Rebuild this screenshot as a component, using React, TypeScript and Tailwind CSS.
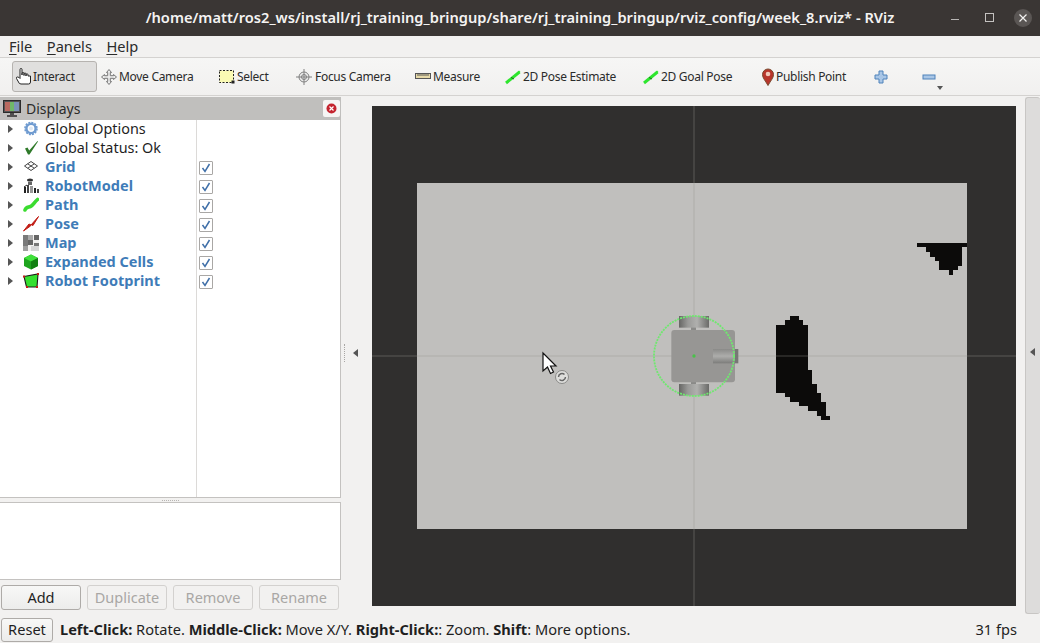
import React from "react";

const displays = [
  { name: "Global Options", kind: "opts", blue: false, check: false },
  { name: "Global Status: Ok", kind: "ok", blue: false, check: false },
  { name: "Grid", kind: "grid", blue: true, check: true },
  { name: "RobotModel", kind: "robot", blue: true, check: true },
  { name: "Path", kind: "path", blue: true, check: true },
  { name: "Pose", kind: "pose", blue: true, check: true },
  { name: "Map", kind: "map", blue: true, check: true },
  { name: "Expanded Cells", kind: "cells", blue: true, check: true },
  { name: "Robot Footprint", kind: "foot", blue: true, check: true },
];

function TreeIcon({ kind }: { kind: string }) {
  const c = "w-4 h-4 shrink-0";
  switch (kind) {
    case "opts":
      return (
        <svg className={c} viewBox="0 0 16 16">
          <circle cx="8" cy="7.5" r="4.6" fill="none" stroke="#6f9bd0" strokeWidth="2.4" />
          <circle cx="8" cy="7.5" r="6" fill="none" stroke="#6f9bd0" strokeWidth="1.6" strokeDasharray="2 1.1" />
          <circle cx="8" cy="7.5" r="2" fill="#dfe8f3" />
        </svg>
      );
    case "ok":
      return (
        <svg className={c} viewBox="0 0 16 16">
          <path d="M2 8.5 L4.5 7.5 L6.2 10.5 L14.5 1 L15 1.5 L6.5 14.5 L5 14.5 Z" fill="#2f7a2a" />
        </svg>
      );
    case "grid":
      return (
        <svg className={c} viewBox="0 0 16 16" fill="none" stroke="#444" strokeWidth="1">
          <path d="M1.5 7 L8 2.5 L14.5 7 L8 11.5 Z" />
          <path d="M4.7 4.8 L11.2 9.2 M11.3 4.8 L4.8 9.2" />
        </svg>
      );
    case "robot":
      return (
        <svg className={c} viewBox="0 0 16 16">
          <ellipse cx="7" cy="2" rx="3" ry="1.6" fill="#333" />
          <rect x="5" y="4" width="4" height="3" fill="#666" />
          <rect x="1" y="9" width="2" height="6" fill="#222" />
          <rect x="4" y="7" width="2" height="8" fill="#444" />
          <rect x="7" y="8" width="3" height="7" fill="#999" />
          <rect x="11" y="10" width="2" height="5" fill="#222" />
          <rect x="14" y="11" width="2" height="4" fill="#444" />
          <path d="M1 9 L4 7" stroke="#222" />
        </svg>
      );
    case "path":
      return (
        <svg className={c} viewBox="0 0 16 16" fill="none">
          <path d="M2 13 C3 10 5 10.5 7.5 9.5 C10 8.5 11 5.5 14.5 2.5" stroke="#3bdc30" strokeWidth="3.6" strokeLinecap="round" />
        </svg>
      );
    case "pose":
      return (
        <svg className={c} viewBox="0 0 16 16">
          <path d="M0.5 15 L6 8 L8 9 L15.5 0.5 L10 9.5 L8 8.5 L7.5 10 Z" fill="#c11d16" stroke="#c11d16" strokeWidth="1" />
        </svg>
      );
    case "map":
      return (
        <svg className={c} viewBox="0 0 16 16">
          <rect x="0" y="0" width="16" height="16" fill="#f2f1f0" />
          <rect x="0" y="0" width="5" height="16" fill="#7a7a7a" />
          <rect x="5" y="0" width="5" height="5" fill="#a8a8a8" />
          <rect x="11" y="0" width="5" height="5" fill="#666" />
          <rect x="5" y="5" width="5" height="5" fill="#666" />
          <rect x="11" y="8" width="5" height="3" fill="#777" />
          <rect x="8" y="11" width="8" height="5" fill="#d6d6d6" />
          <rect x="0" y="11" width="5" height="5" fill="#a0a0a0" />
        </svg>
      );
    case "cells":
      return (
        <svg className={c} viewBox="0 0 16 16">
          <path d="M8 0.5 L15 4 L15 12 L8 15.5 L1 12 L1 4 Z" fill="#1fa51f" />
          <path d="M8 0.5 L15 4 L8 7.5 L1 4 Z" fill="#3fe03a" />
          <path d="M8 7.5 L15 4 L15 12 L8 15.5 Z" fill="#128012" />
        </svg>
      );
    default:
      return (
        <svg className={c} viewBox="0 0 16 16">
          <path d="M1 3.5 L15 1 L14 14 L3.5 14 Z" fill="#35e02f" stroke="#1a1a1a" strokeWidth="1.1" />
          <rect x="0" y="2.5" width="2" height="2" fill="#c11d16" />
          <rect x="14" y="0" width="2" height="2" fill="#c11d16" />
          <rect x="3" y="13" width="2" height="2" fill="#c11d16" />
          <rect x="13" y="13" width="2" height="2" fill="#c11d16" />
        </svg>
      );
  }
}

function ToolIcon({ kind }: { kind: string }) {
  switch (kind) {
    case "interact":
      return (
        <svg className="w-[18px] h-[20px] shrink-0" viewBox="0 0 18 20" fill="#fff" stroke="#222" strokeWidth="1">
          <path d="M5 11 V2.5 a1 1 0 0 1 2 0 V8 V6.5 a1 1 0 0 1 2 0 V8.5 V7 a1 1 0 0 1 2 0 V9 V7.8 a1 1 0 0 1 2 0 V9 h2.5 v6 q0 2 -2 2 H6 q-2 0 -2.5 -2 L1.5 11.5 q-.5 -1.5 1 -1.5 Q4 10 5 11.5 Z" />
        </svg>
      );
    case "move":
      return (
        <svg className="w-4 h-4 shrink-0" viewBox="0 0 16 16" fill="#ececec" stroke="#777" strokeWidth="1">
          <path d="M8 .5 L10.5 3.5 H9.3 V6.7 H12.5 V5.5 L15.5 8 L12.5 10.5 V9.3 H9.3 V12.5 H10.5 L8 15.5 L5.5 12.5 H6.7 V9.3 H3.5 V10.5 L.5 8 L3.5 5.5 V6.7 H6.7 V3.5 H5.5 Z" />
        </svg>
      );
    case "select":
      return (
        <svg className="w-4 h-4 shrink-0" viewBox="0 0 16 16">
          <rect x=".5" y="1.5" width="14" height="12" fill="#fafab4" stroke="#222" strokeDasharray="2 1.5" />
          <rect x="12.5" y="11.5" width="3" height="3" fill="#222" />
        </svg>
      );
    case "focus":
      return (
        <svg className="w-4 h-4 shrink-0" viewBox="0 0 16 16" fill="none" stroke="#808080" strokeWidth="1">
          <circle cx="8" cy="8" r="5" fill="#ececec" />
          <circle cx="8" cy="8" r="2.5" />
          <path d="M8 0 V16 M0 8 H16" />
        </svg>
      );
    case "measure":
      return (
        <svg className="w-4 h-4 shrink-0" viewBox="0 0 16 16">
          <rect x=".5" y="4.5" width="15" height="5" fill="#e6d9a8" stroke="#555" />
          <path d="M3 5 V7 M5 5 V7 M7 5 V7 M9 5 V7 M11 5 V7 M13 5 V7" stroke="#555" />
        </svg>
      );
    case "arrow":
      return (
        <svg className="w-4 h-4 shrink-0" viewBox="0 0 16 16">
          <path d="M1 14 L14.5 3" stroke="#2ee62e" strokeWidth="3" />
          <path d="M14 1.5 L15.5 3 L11 6 Z" fill="#2ee62e" />
          <path d="M6 8.5 L9 10" stroke="#1b6b1b" strokeWidth="1" />
        </svg>
      );
    default:
      return (
        <svg className="w-[14px] h-[18px] shrink-0" viewBox="0 0 14 18">
          <path d="M7 17.5 C4 12 1.5 10 1.5 6.5 a5.5 5.5 0 0 1 11 0 C12.5 10 10 12 7 17.5 Z" fill="#b8352b" stroke="#7a4a30" strokeWidth="1" />
          <circle cx="7" cy="6" r="2.3" fill="#f0c8b8" />
        </svg>
      );
  }
}

function Tool({ kind, label, className }: { kind: string; label: string; className: string }) {
  return (
    <div className={`flex items-center text-[12px] tracking-[-0.3px] text-[#2b2b2b] ${className}`}>
      <ToolIcon kind={kind} />
      <span>{label}</span>
    </div>
  );
}

function PanelButton({ label, disabled, w }: { label: string; disabled?: boolean; w: string }) {
  return (
    <div
      className={`${w} h-[25px] flex items-center justify-center rounded-[3px] border text-[14.5px] ${
        disabled
          ? "border-[#d3d1cf] text-[#a9a7a5] bg-[#f2f1f0]"
          : "border-[#aeaba8] text-[#1f1f1f] bg-gradient-to-b from-[#f8f8f7] to-[#ececeb]"
      }`}
    >
      {label}
    </div>
  );
}

function Tri({ dir }: { dir: "left" | "right" }) {
  return (
    <svg className="w-[6px] h-[8px] shrink-0" viewBox="0 0 6 8">
      <path d={dir === "left" ? "M5 0 V8 L0 4 Z" : "M1 0 V8 L6 4 Z"} fill="#555" />
    </svg>
  );
}

function Viewport() {
  return (
    <svg className="w-[644px] h-[500px] block" viewBox="372 106 644 500">
      <defs>
        <linearGradient id="wheel" x1="0" x2="1" y1="0" y2="0">
          <stop offset="0" stopColor="#666664" />
          <stop offset=".3" stopColor="#9a9a98" />
          <stop offset=".6" stopColor="#b0b0ae" />
          <stop offset="1" stopColor="#6a6a68" />
        </linearGradient>
        <linearGradient id="caster" x1="0" x2="0" y1="0" y2="1">
          <stop offset="0" stopColor="#8a8a88" />
          <stop offset=".5" stopColor="#adadab" />
          <stop offset="1" stopColor="#7c7c7a" />
        </linearGradient>
      </defs>
      <rect x="372" y="106" width="644" height="500" fill="#302f2e" />
      <rect x="417" y="183" width="550" height="346" fill="#c0bfbd" />
      <g transform="translate(765 310) scale(0.3333)">
        <path
          fill="#0c0b0a"
          d="M75 18H102V30H114V45H129V180H141V222H156V249H168V276H183V318H195V330H168V318H156V303H129V288H102V276H75V261H60V249H33V45H60V30H75Z"
        />
      </g>
      <g transform="translate(905 235) scale(0.3333)">
        <path
          fill="#0c0b0a"
          d="M36 24H186V36H171V93H159V105H144V120H132V105H102V78H90V66H75V51H63V36H36Z"
        />
      </g>
      <path d="M372 356H1016M694 106V606" stroke="#949492" strokeOpacity="0.42" strokeWidth="1" />
      <g transform="translate(640 305) scale(0.3333)">
        <rect x="153" y="66" width="15" height="12" fill="#8a8a88" />
        <rect x="153" y="230" width="15" height="10" fill="#8a8a88" />
        <rect x="117" y="33" width="90" height="35" fill="url(#wheel)" />
        <rect x="117" y="237" width="90" height="35" fill="url(#wheel)" />
        <rect x="94" y="75" width="191" height="157" rx="9" fill="#979694" />
        <rect x="280" y="132" width="15" height="43" fill="#777775" />
        <rect x="219" y="132" width="66" height="43" fill="url(#caster)" />
        <circle cx="162" cy="153" r="120" fill="none" stroke="#6fe86f" strokeWidth="5.5" strokeDasharray="6 3" />
        <circle cx="162" cy="153" r="5" fill="#49c149" />
      </g>
      <path
        d="M543 353 V371 L547.5 367 L550.5 373.5 L553.5 372 L550.5 366 L556 366 Z"
        fill="#fff"
        stroke="#111"
        strokeWidth="1.2"
      />
      <circle cx="562" cy="377" r="6.5" fill="#dededc" stroke="#8a8a88" />
      <path d="M558.5 377 a3.5 3.5 0 0 1 6 -2.4 M565.5 377 a3.5 3.5 0 0 1 -6 2.4" fill="none" stroke="#666" strokeWidth="1.5" />
    </svg>
  );
}

export default function App() {
  return (
    <div className="w-[1040px] h-[643px] flex flex-col overflow-hidden bg-[#f2f1f0] font-['Noto_Sans',sans-serif] text-[#2b2b2b]">
      {/* Title */}
      <div className="h-[36px] shrink-0 bg-[#3a3634] flex items-center text-white relative">
        <div className="flex-1 text-center text-[14.65px] font-semibold text-[#f4f3f2]">
          /home/matt/ros2_ws/install/rj_training_bringup/share/rj_training_bringup/rviz_config/week_8.rviz* - RViz
        </div>
        <div className="absolute right-[8px] top-[9px] flex items-center">
          <svg className="w-[18px] h-[18px] mr-[15px]" viewBox="0 0 18 18">
            <path d="M4 10.5H12" stroke="#b8b6b4" strokeWidth="1" />
          </svg>
          <svg className="w-[18px] h-[18px] mr-[16px]" viewBox="0 0 18 18" fill="none">
            <rect x="5.5" y="4.5" width="8" height="8" stroke="#c4c2c0" strokeWidth="1" />
          </svg>
          <div className="w-[18px] h-[18px] rounded-full bg-[#5a5654] flex items-center justify-center -mt-[1px]">
            <svg className="w-[10px] h-[10px]" viewBox="0 0 10 10">
              <path d="M1.5 1.5L8.5 8.5M8.5 1.5L1.5 8.5" stroke="#f2f1f0" strokeWidth="1.2" />
            </svg>
          </div>
        </div>
      </div>

      {/* Menu */}
      <div className="h-[21px] shrink-0 flex items-center text-[14.6px] text-[#2b2b2b] pl-[9px] gap-[14.5px] bg-[#f2f1f0]">
        <span><u className="underline-offset-2">F</u>ile</span>
        <span><u className="underline-offset-2">P</u>anels</span>
        <span><u className="underline-offset-2">H</u>elp</span>
      </div>

      {/* Toolbar */}
      <div className="h-[39px] shrink-0 flex items-center border-y border-[#d4d2d0] bg-gradient-to-b from-[#f6f6f5] to-[#f1f0ef] relative">
        <div className="w-[12px] shrink-0" />
        <div className="w-[85px] h-[31px] shrink-0 flex items-center pl-[2px] rounded-[3px] border border-[#b6b3b0] bg-[#e0dfde] text-[12px] tracking-[-0.3px]">
          <ToolIcon kind="interact" />
          <span>Interact</span>
        </div>
        <Tool kind="move" label="Move Camera" className="ml-[4px] w-[118px] gap-[2px]" />
        <Tool kind="select" label="Select" className="w-[77px] gap-[2px]" />
        <Tool kind="focus" label="Focus Camera" className="w-[119px] gap-[3px]" />
        <Tool kind="measure" label="Measure" className="w-[90px] gap-[2px]" />
        <Tool kind="arrow" label="2D Pose Estimate" className="w-[138px] gap-[2px]" />
        <Tool kind="arrow" label="2D Goal Pose" className="w-[118px] gap-[2px]" />
        <Tool kind="pin" label="Publish Point" className="w-[113px] gap-[1px]" />
        <svg className="w-[14px] h-[14px] shrink-0" viewBox="0 0 14 14">
          <path d="M5 1H9V5H13V9H9V13H5V9H1V5H5Z" fill="#a9c6e6" stroke="#4f82ba" strokeWidth="1" />
        </svg>
        <svg className="w-[14px] h-[14px] shrink-0 ml-[34px]" viewBox="0 0 14 14">
          <rect x="1" y="5" width="12" height="4" fill="#a9c6e6" stroke="#4f82ba" strokeWidth="1" />
        </svg>
        <svg className="absolute left-[936px] top-[28px] w-[8px] h-[5px]" viewBox="0 0 8 5">
          <path d="M1 0H7L4 4Z" fill="#555" />
        </svg>
      </div>

      {/* Main */}
      <div className="flex-1 min-h-0 flex">
        {/* Left */}
        <div className="w-[341px] shrink-0 flex flex-col">
          <div className="h-[23px] shrink-0 mt-[1px] bg-[#c0bfbd] flex items-center pl-[3px] text-[14px] text-[#2b2b2b]">
            <svg className="w-[18px] h-[17px] shrink-0" viewBox="0 0 18 17">
              <rect x=".5" y=".5" width="17" height="12" fill="#555" stroke="#2b2b2b" />
              <rect x="2" y="2" width="5" height="9" fill="#b96a60" />
              <rect x="7" y="2" width="4" height="9" fill="#70b868" />
              <rect x="11" y="2" width="5" height="9" fill="#7b92b8" />
              <path d="M7 14H11M4 16H14" stroke="#2b2b2b" strokeWidth="1.6" />
            </svg>
            <span className="ml-[5px]">Displays</span>
            <div className="ml-auto mr-[1px] w-[17px] h-[17px] rounded-[2px] bg-[#f6f5f4] flex items-center justify-center">
              <svg className="w-[11px] h-[11px]" viewBox="0 0 11 11">
                <circle cx="5.5" cy="5.5" r="5" fill="#c4242f" />
                <path d="M3.5 3.5L7.5 7.5M7.5 3.5L3.5 7.5" stroke="#fff" strokeWidth="1.2" />
              </svg>
            </div>
          </div>

          <div className="h-[378px] shrink-0 bg-white border-r border-b border-[#c4c2c0] flex">
            <div className="w-[197px] shrink-0 border-r border-[#dcdad8]">
              {displays.map((d) => (
                <div key={d.name} className="h-[19px] flex items-center pb-[1px]">
                  <div className="w-[20px] pl-[7px] shrink-0">
                    <Tri dir="right" />
                  </div>
                  <div className="w-[25px] pl-[3px] shrink-0">
                    <TreeIcon kind={d.kind} />
                  </div>
                  <span className={d.blue ? "text-[14.5px] font-bold text-[#3f7cb8]" : "text-[14.4px] text-[#1f1f1f]"}>
                    {d.name}
                  </span>
                </div>
              ))}
            </div>
            <div className="flex-1">
              {displays.map((d) => (
                <div key={d.name} className="h-[19px] flex items-center pl-[2px]">
                  {d.check && (
                    <div className="w-[14px] h-[14px] border border-[#a9a7a5] rounded-[1px] bg-white flex items-center justify-center">
                      <svg className="w-[10px] h-[10px]" viewBox="0 0 10 10">
                        <path d="M1.5 5L4 8.5L8.5 1" fill="none" stroke="#3f6fa8" strokeWidth="1.5" />
                      </svg>
                    </div>
                  )}
                </div>
              ))}
            </div>
          </div>

          <div className="h-[4px] shrink-0 flex items-center justify-center">
            <div className="w-[17px] border-t border-dotted border-[#b8b6b4]" />
          </div>

          <div className="h-[78px] shrink-0 bg-white border border-l-0 border-[#c4c2c0]" />

          <div className="flex mt-[5px] pl-[1px] gap-[6px]">
            <PanelButton label="Add" w="w-[80px]" />
            <PanelButton label="Duplicate" disabled w="w-[80px]" />
            <PanelButton label="Remove" disabled w="w-[80px]" />
            <PanelButton label="Rename" disabled w="w-[80px]" />
          </div>
        </div>

        {/* Splitter */}
        <div className="w-[31px] shrink-0 flex items-center pl-[3px] pb-[7px]">
          <div className="h-[18px] border-l border-dotted border-[#a8a6a4]" />
          <div className="ml-[8px]">
            <Tri dir="left" />
          </div>
        </div>

        {/* Viewport */}
        <div className="w-[644px] shrink-0 pt-[10px]">
          <Viewport />
        </div>

        {/* Right strip */}
        <div className="flex-1 flex pl-[9px] pt-[1px] pb-[3px]">
          <div className="flex-1 rounded-[3px] border border-r-0 border-[#c8c6c4] bg-[#dddcdb] flex items-center justify-center pb-[7px]">
            <Tri dir="left" />
          </div>
        </div>
      </div>

      {/* Status */}
      <div className="h-[26px] shrink-0 flex items-center pl-[1px] text-[14.6px]">
        <div className="w-[52px] h-[24px] border border-[#aeaba8] rounded-[3px] bg-gradient-to-b from-[#f8f8f7] to-[#ececeb] flex items-center justify-center text-[#1f1f1f]">
          Reset
        </div>
        <div className="ml-[7px] text-[#1f1f1f]">
          <b>Left-Click:</b> Rotate. <b>Middle-Click:</b> Move X/Y. <b>Right-Click:</b>: Zoom. <b>Shift</b>: More options.
        </div>
        <div className="ml-auto mr-[23px] text-[#1f1f1f]">31 fps</div>
      </div>
    </div>
  );
}
